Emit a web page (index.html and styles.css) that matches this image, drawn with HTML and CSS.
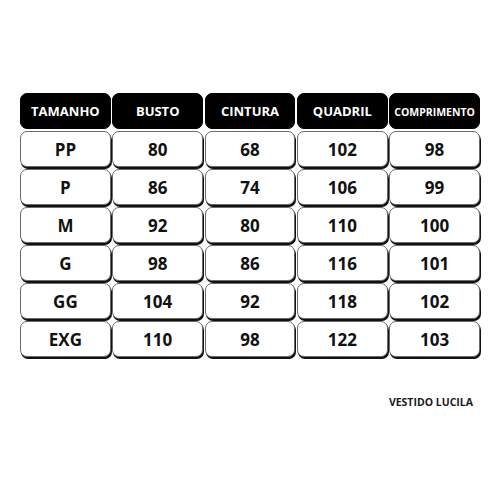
FILE: index.html
```html
<!DOCTYPE html>
<html lang="pt">
<head>
<meta charset="utf-8">
<link rel="stylesheet" href="styles.css">
</head>
<body>
<main class="page">
  <div class="grid">
    <div class="cell head">TAMANHO</div>
    <div class="cell head">BUSTO</div>
    <div class="cell head">CINTURA</div>
    <div class="cell head">QUADRIL</div>
    <div class="cell head small">COMPRIMENTO</div>

    <div class="cell">PP</div><div class="cell">80</div><div class="cell">68</div><div class="cell">102</div><div class="cell">98</div>
    <div class="cell">P</div><div class="cell">86</div><div class="cell">74</div><div class="cell">106</div><div class="cell">99</div>
    <div class="cell">M</div><div class="cell">92</div><div class="cell">80</div><div class="cell">110</div><div class="cell">100</div>
    <div class="cell">G</div><div class="cell">98</div><div class="cell">86</div><div class="cell">116</div><div class="cell">101</div>
    <div class="cell">GG</div><div class="cell">104</div><div class="cell">92</div><div class="cell">118</div><div class="cell">102</div>
    <div class="cell">EXG</div><div class="cell">110</div><div class="cell">98</div><div class="cell">122</div><div class="cell">103</div>
  </div>
  <p class="caption">VESTIDO LUCILA</p>
</main>
</body>
</html>
```
FILE: styles.css
```css
html, body {
  margin: 0;
  padding: 0;
  background: #ffffff;
}
.page {
  width: 500px;
  height: 500px;
  box-sizing: border-box;
  padding: 93px 20px 0 20px;
  font-family: "Open Sans", "DejaVu Sans", sans-serif;
  font-weight: 700;
  color: #111;
}
.grid {
  display: grid;
  grid-template-columns: repeat(5, 1fr);
  grid-auto-rows: 36px;
  gap: 2px 1.5px;
}
.cell {
  display: flex;
  align-items: center;
  justify-content: center;
  box-sizing: border-box;
  background: #fff;
  border: 1px solid #6a6a6a;
  border-radius: 7px;
  box-shadow: 1px 2px 0 #111;
  font-size: 17px;
  line-height: 1;
}
.head {
  background: #000;
  border-color: #000;
  color: #fff;
  font-size: 13px;
  box-shadow: none;
}
.head.small {
  font-size: 10.5px;
  padding-top: 3px;
}
.caption {
  margin: 40px 0 0 0;
  text-align: right;
  padding-right: 7px;
  font-size: 10.5px;
  line-height: 1;
  color: #1a1a1a;
}
```
